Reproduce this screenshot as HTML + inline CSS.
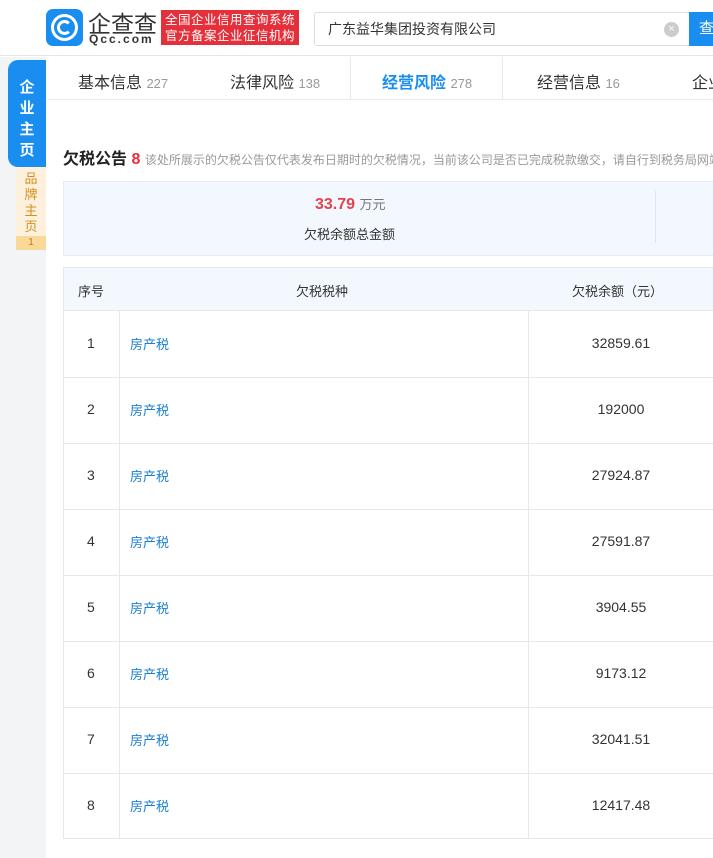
<!DOCTYPE html>
<html><head><meta charset="utf-8"><style>
*{margin:0;padding:0;box-sizing:border-box}
body{width:713px;height:858px;overflow:hidden;background:#fff;font-family:"Liberation Sans","Noto Sans CJK SC",sans-serif;position:relative;color:#333}
.abs{position:absolute;white-space:nowrap}
</style></head><body>
<div class="abs" style="left:0;top:0;width:713px;height:56px;background:#fff;border-bottom:1px solid #e6e6e6"></div>
<div class="abs" style="left:46px;top:9px;width:37px;height:37px;background:#1a8ef0;border-radius:7px"></div>
<div class="abs" style="left:51px;top:14px;width:27px;height:27px;border-radius:50%;border:3px solid #fff"></div>
<div class="abs" style="left:57px;top:20px;width:15px;height:15px;border-radius:50%;border:3px solid #fff;border-right-color:transparent"></div>
<div class="abs" style="left:88px;top:5px;font-size:23px;color:#333;letter-spacing:0px">企查查</div>
<div class="abs" style="left:89px;top:32px;font-size:12px;color:#333;letter-spacing:2px;font-weight:bold">Qcc.com</div>
<div class="abs" style="left:161px;top:10px;width:138px;height:35px;background:#e5303b;color:#fff;font-size:12.5px;line-height:16px;padding:2px 4px;letter-spacing:0.5px;white-space:normal">全国企业信用查询系统<br>官方备案企业征信机构</div>
<div class="abs" style="left:314px;top:12px;width:380px;height:34px;border:1px solid #ddd;border-radius:3px;font-size:14px;line-height:32px;padding-left:13px;color:#333">广东益华集团投资有限公司</div>
<div class="abs" style="left:664px;top:22px;width:15px;height:15px;border-radius:50%;background:#ccc;color:#fff;font-size:11px;line-height:15px;text-align:center">×</div>
<div class="abs" style="left:689px;top:12px;width:30px;height:34px;background:#1a8ef0;color:#fff;font-size:15px;line-height:34px;padding-left:10px">查</div>
<div class="abs" style="left:0;top:57px;width:46px;height:801px;background:#f3f4f6"></div>
<div class="abs" style="left:8px;top:60px;width:38px;height:107px;background:#1a8ef0;border-radius:10px 0 0 10px;color:#fff;font-weight:bold;font-size:15px;line-height:21px;text-align:center;padding-top:17px;white-space:normal">企<br>业<br>主<br>页</div>
<div class="abs" style="left:16px;top:167px;width:30px;height:83px;background:#fdf1dd;border-radius:0 0 0 6px;color:#d58e1f;font-size:13px;line-height:16px;text-align:center;padding-top:4px;white-space:normal">品<br>牌<br>主<br>页</div>
<div class="abs" style="left:16px;top:236px;width:30px;height:14px;background:#f9d898;color:#c07d17;font-size:10px;line-height:14px;text-align:center">1</div>
<div class="abs" style="left:47px;top:99px;width:666px;height:1px;background:#eaeaea"></div>
<div class="abs" style="left:350px;top:57px;width:1px;height:42px;background:#eaeaea"></div>
<div class="abs" style="left:502px;top:57px;width:1px;height:42px;background:#eaeaea"></div>
<div class="abs" style="left:78px;top:69px;font-size:16px;color:#333">基本信息 <span style="font-size:13px;color:#999">227</span></div>
<div class="abs" style="left:230px;top:69px;font-size:16px;color:#333">法律风险 <span style="font-size:13px;color:#999">138</span></div>
<div class="abs" style="left:382px;top:69px;font-size:16px;color:#1a8ef0;font-weight:bold">经营风险 <span style="font-size:13px;color:#999;font-weight:normal">278</span></div>
<div class="abs" style="left:537px;top:69px;font-size:16px;color:#333">经营信息 <span style="font-size:13px;color:#999">16</span></div>
<div class="abs" style="left:692px;top:69px;font-size:16px;color:#333">企业</div>
<div class="abs" style="left:63px;top:145px;font-size:16px;font-weight:bold;color:#222">欠税公告 <span style="color:#e5303b">8</span> <span style="font-size:12px;color:#999;font-weight:normal">该处所展示的欠税公告仅代表发布日期时的欠税情况，当前该公司是否已完成税款缴交，请自行到税务局网站</span></div>
<div class="abs" style="left:63px;top:181px;width:660px;height:75px;background:#f2f8fd;border:1px solid #e5eef6"></div>
<div class="abs" style="left:655px;top:191px;width:1px;height:52px;background:#dde6ee"></div>
<div class="abs" style="left:315px;top:194px;font-size:16px;font-weight:bold;color:#e5434b">33.79 <span style="font-size:13px;color:#777;font-weight:normal">万元</span></div>
<div class="abs" style="left:304px;top:224px;font-size:13px;color:#333">欠税余额总金额</div>
<div class="abs" style="left:63px;top:267px;width:660px;height:572px;border:1px solid #e8e8e8"></div>
<div class="abs" style="left:64px;top:268px;width:660px;height:43px;background:#f2f8fd;border-bottom:1px solid #e8e8e8"></div>
<div class="abs" style="left:78px;top:281px;font-size:13px">序号</div>
<div class="abs" style="left:296px;top:281px;font-size:13px">欠税税种</div>
<div class="abs" style="left:572px;top:281px;font-size:13px">欠税余额（元）</div>
<div class="abs" style="left:119px;top:311px;width:1px;height:528px;background:#e8e8e8"></div>
<div class="abs" style="left:528px;top:311px;width:1px;height:528px;background:#e8e8e8"></div>
<div id="rows"></div>
<script>
var v=["32859.61","192000","27924.87","27591.87","3904.55","9173.12","32041.51","12417.48"],h="";
for(var i=0;i<8;i++){var y=311+i*66;
if(i>0)h+='<div class="abs" style="left:64px;top:'+y+'px;width:650px;height:1px;background:#e8e8e8"></div>';
h+='<div class="abs" style="left:87px;top:'+(y+24)+'px;font-size:14px">'+(i+1)+'</div>';
h+='<div class="abs" style="left:130px;top:'+(y+23)+'px;font-size:13px;color:#1a7fd4">房产税</div>';
h+='<div class="abs" style="left:528px;width:186px;text-align:center;top:'+(y+24)+'px;font-size:14px">'+v[i]+'</div>';}
document.getElementById('rows').innerHTML=h;
</script>
</body></html>
